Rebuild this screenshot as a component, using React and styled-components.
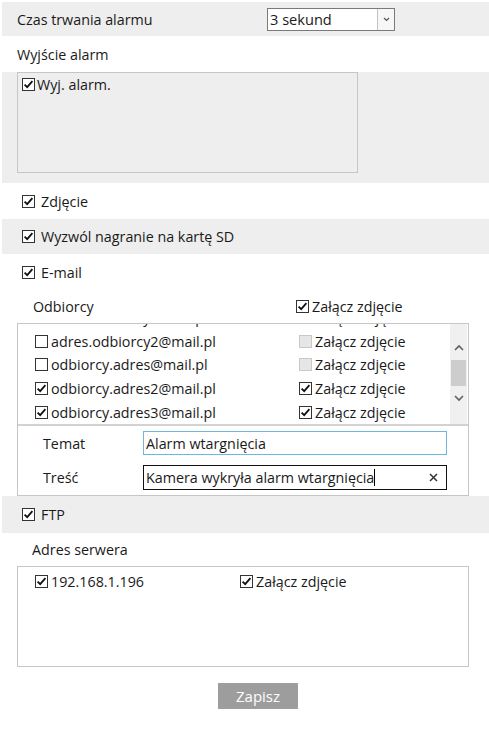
import React, { useEffect, useRef } from "react";
import styled, { createGlobalStyle } from "styled-components";

const Global = createGlobalStyle`
  html, body { margin: 0; padding: 0; background: #fff; }
  body { font-family: "Open Sans", "Noto Sans", sans-serif; font-size: 14.3px; color: #1a1a1a; }
  * { box-sizing: border-box; }
`;

const Page = styled.div`
  width: 489px;
  padding: 2px 0 0 2px;
`;

const Band = styled.div`
  display: flex;
  align-items: center;
  height: ${(p) => p.$h}px;
  padding-left: ${(p) => p.$pl ?? 15}px;
  background: ${(p) => (p.$gray ? "#eeeeee" : "#ffffff")};
`;

const Section = styled.div`
  background: ${(p) => (p.$gray ? "#eeeeee" : "#ffffff")};
  padding: ${(p) => p.$pad || "0"};
`;

const Label = styled.span`
  width: ${(p) => (p.$w ? p.$w + "px" : "auto")};
  flex-shrink: 0;
  white-space: nowrap;
`;

const Select = styled.div`
  margin-left: 115px;
  width: 128px;
  height: 23px;
  border: 1px solid #7a7a7a;
  background: #fff;
  display: flex;
  align-items: stretch;
`;

const SelectValue = styled.span`
  flex: 1;
  display: flex;
  align-items: center;
  padding-left: 2px;
  font-size: 14.6px;
`;

const SelectArrow = styled.span`
  width: 17px;
  border-left: 1px solid #c4c4c4;
  background: #f7f7f7;
  display: flex;
  align-items: center;
  justify-content: center;
`;

const Box = styled.div`
  margin-left: ${(p) => p.$ml ?? 15}px;
  width: ${(p) => p.$w}px;
  height: ${(p) => (p.$h ? p.$h + "px" : "auto")};
  border: ${(p) => (p.$bare ? "none" : "1px solid #c6c6c6")};
  background: ${(p) => (p.$gray ? "#eeeeee" : "#ffffff")};
  padding: ${(p) => p.$pad || "0"};
`;

const CheckRow = styled.label`
  display: flex;
  align-items: center;
  gap: ${(p) => p.$gap ?? 3}px;
  white-space: nowrap;
`;

const BoxWrap = styled.span`
  width: 13px;
  height: 13px;
  flex-shrink: 0;
  border: 1px solid ${(p) => (p.$disabled ? "#c8c8c8" : "#333")};
  background: ${(p) => (p.$disabled ? "#e6e6e6" : "#fff")};
  display: inline-flex;
  align-items: center;
  justify-content: center;
`;

const Check = ({ checked, disabled }) => (
  <BoxWrap $disabled={disabled}>
    {checked && (
      <svg width="11" height="11" viewBox="0 0 11 11">
        <path d="M1.6 5.6 L4.2 8.2 L9.4 2.2" fill="none" stroke="#111" strokeWidth="1.8" />
      </svg>
    )}
  </BoxWrap>
);

const ListBox = styled.div`
  margin-left: 15px;
  width: 452px;
  border: 1px solid #c6c6c6;
  background: #fff;
`;

const ListArea = styled.div`
  display: flex;
  height: 102px;
  border-bottom: 2px solid #d2d2d2;
`;

const Scroller = styled.div`
  flex: 1;
  overflow: hidden;
`;

const Grid = styled.div`
  display: grid;
  grid-template-columns: ${(p) => p.$col}px auto;
  grid-auto-rows: ${(p) => p.$row}px;
  align-items: center;
  padding-left: 17px;
`;

const Scrollbar = styled.div`
  width: 17px;
  margin-right: 1px;
  background: #f0f0f0;
  display: flex;
  flex-direction: column;
  align-items: center;
  padding-top: 18px;
`;

const Arrow = styled.span`
  height: 10px;
  display: flex;
  align-items: center;
  justify-content: center;
`;

const Thumb = styled.div`
  width: 15px;
  height: 26px;
  background: #cdcdcd;
  margin: 8px 0 7px;
`;

const Form = styled.div`
  padding: 5px 0 5px 25px;
  display: flex;
  flex-direction: column;
  gap: 10px;
`;

const FormRow = styled.div`
  display: flex;
  align-items: center;
`;

const Input = styled.div`
  width: 304px;
  height: ${(p) => p.$h}px;
  border: 1px solid ${(p) => (p.$focus ? "#6fb7e0" : "#111")};
  display: flex;
  align-items: center;
  padding: 0 8px 0 2px;
  white-space: nowrap;
`;

const Caret = styled.span`
  width: 1px;
  height: 17px;
  background: #000;
`;

const Clear = styled.span`
  margin-left: auto;
  display: flex;
`;

const Button = styled.button`
  margin: 16px 0 0 216px;
  width: 80px;
  height: 26px;
  border: none;
  background: #9d9d9d;
  color: #fff;
  font-family: "Open Sans", "Noto Sans", sans-serif;
  font-size: 15px;
  padding: 0;
`;

const Chevron = ({ up }) => (
  <svg width="10" height="7" viewBox="0 0 10 7">
    <path d={up ? "M1 6 L5 2 L9 6" : "M1 1 L5 5 L9 1"} fill="none" stroke="#606060" strokeWidth="1.6" />
  </svg>
);

const recipients = [
  ["adres.odbiorcy@mail.pl", true, true],
  ["adres.odbiorcy2@mail.pl", false, false],
  ["odbiorcy.adres@mail.pl", false, false],
  ["odbiorcy.adres2@mail.pl", true, true],
  ["odbiorcy.adres3@mail.pl", true, true],
];

export default function App() {
  const scRef = useRef(null);
  useEffect(() => {
    if (scRef.current) scRef.current.scrollTop = 19;
  }, []);
  return (
    <>
      <Global />
      <Page>
        <Band $gray $h={34}>
          <Label $w={135}>Czas trwania alarmu</Label>
          <Select>
            <SelectValue>3 sekund</SelectValue>
            <SelectArrow>
              <svg width="7" height="5" viewBox="0 0 7 5">
                <path d="M1 1 L3.5 3.5 L6 1" fill="none" stroke="#555" strokeWidth="1.2" />
              </svg>
            </SelectArrow>
          </Select>
        </Band>
        <Band $h={36}>
          <Label>Wyjście alarm</Label>
        </Band>
        <Section $gray $pad="0 0 10px 0">
          <Box $gray $w={341} $h={101} $pad="2px 0 0 4px">
            <CheckRow $gap={2}>
              <Check checked />
              <span>Wyj. alarm.</span>
            </CheckRow>
          </Box>
        </Section>
        <Band $h={36} $pl={20}>
          <CheckRow $gap={6}>
            <Check checked />
            <span>Zdjęcie</span>
          </CheckRow>
        </Band>
        <Band $gray $h={35} $pl={20}>
          <CheckRow $gap={6}>
            <Check checked />
            <span>Wyzwól nagranie na kartę SD</span>
          </CheckRow>
        </Band>
        <Band $h={36} $pl={20}>
          <CheckRow $gap={6}>
            <Check checked />
            <span>E-mail</span>
          </CheckRow>
        </Band>
        <Band $h={33} $pl={31}>
          <Label $w={263}>Odbiorcy</Label>
          <CheckRow>
            <Check checked />
            <span>Załącz zdjęcie</span>
          </CheckRow>
        </Band>
        <ListBox>
          <ListArea>
            <Scroller ref={scRef}>
              <Grid $col={264} $row={23.6}>
                {recipients.map(([mail, on, att]) => (
                  <React.Fragment key={mail}>
                    <CheckRow>
                      <Check checked={on} />
                      <span>{mail}</span>
                    </CheckRow>
                    <CheckRow>
                      <Check checked={att} disabled={!on} />
                      <span>Załącz zdjęcie</span>
                    </CheckRow>
                  </React.Fragment>
                ))}
              </Grid>
            </Scroller>
            <Scrollbar>
              <Arrow><Chevron up /></Arrow>
              <Thumb />
              <Arrow><Chevron /></Arrow>
            </Scrollbar>
          </ListArea>
          <Form>
            <FormRow>
              <Label $w={100}>Temat</Label>
              <Input $focus $h={24}>Alarm wtargnięcia</Input>
            </FormRow>
            <FormRow>
              <Label $w={100}>Treść</Label>
              <Input $h={25}>
                Kamera wykryła alarm wtargnięcia
                <Caret />
                <Clear>
                  <svg width="9" height="9" viewBox="0 0 9 9">
                    <path d="M1 1 L8 8 M8 1 L1 8" stroke="#333" strokeWidth="1.5" />
                  </svg>
                </Clear>
              </Input>
            </FormRow>
          </Form>
        </ListBox>
        <Band $gray $h={37} $pl={20}>
          <CheckRow $gap={6}>
            <Check checked />
            <span>FTP</span>
          </CheckRow>
        </Band>
        <Band $h={33} $pl={30}>
          <Label>Adres serwera</Label>
        </Band>
        <ListBox>
          <Box $bare $ml={0} $w={450} $h={99} $pad="3px 0 0 0">
            <Grid $col={205} $row={22}>
              <CheckRow>
                <Check checked />
                <span>192.168.1.196</span>
              </CheckRow>
              <CheckRow>
                <Check checked />
                <span>Załącz zdjęcie</span>
              </CheckRow>
            </Grid>
          </Box>
        </ListBox>
        <Button>Zapisz</Button>
      </Page>
    </>
  );
}
